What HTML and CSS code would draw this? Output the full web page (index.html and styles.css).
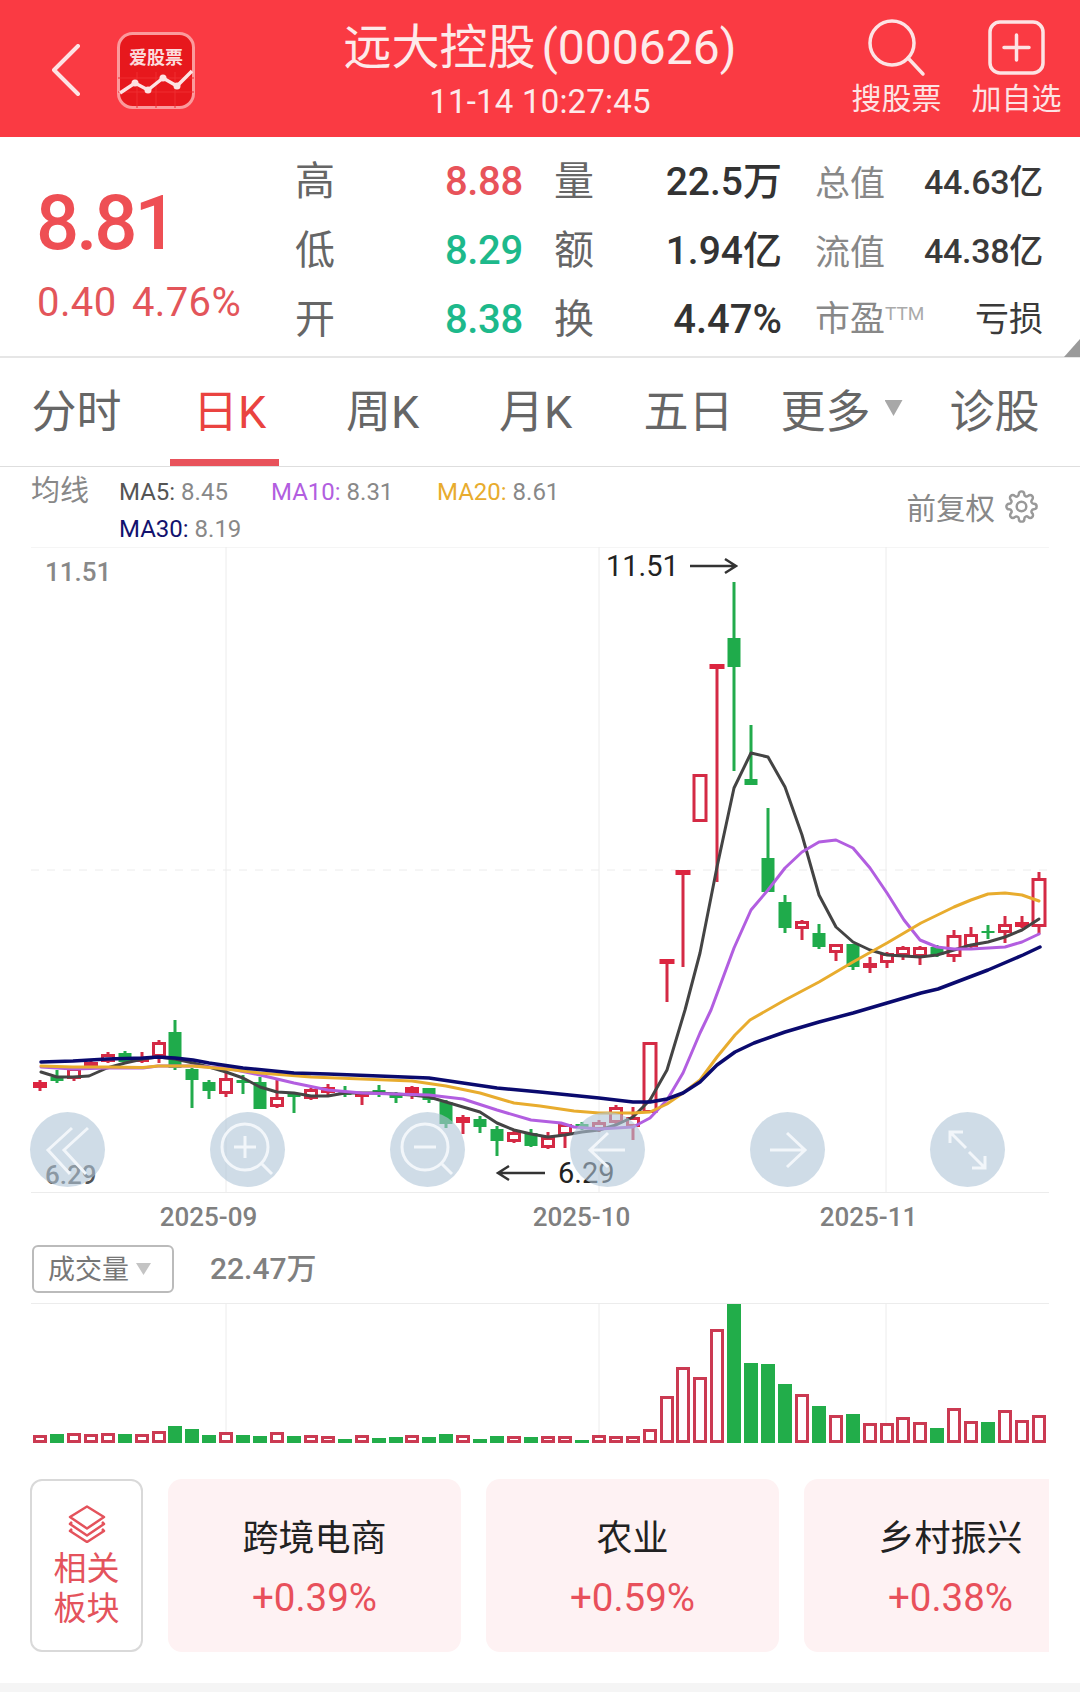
FILE: index.html
```html
<!DOCTYPE html>
<html lang="zh-CN">
<head>
<meta charset="utf-8">
<title>远大控股 (000626)</title>
<link rel="stylesheet" href="styles.css">
</head>
<body>
<div class="app">
  <header class="hdr">
    <div class="hdr-left">
      <svg class="back" viewBox="0 0 30 52"><path d="M26 2 2 26l24 24"/></svg>
      <svg class="logo" viewBox="0 0 78 77">
        <rect class="logo-bg" x="1.5" y="1.5" width="75" height="74" rx="14"/>
        <path class="logo-grid" d="M1 46H77M1 60H77M20 40V76M39 40V76M58 40V76"/>
        <text class="logo-text" x="39" y="32" text-anchor="middle">爱股票</text>
        <polyline class="logo-line" points="3,61 18,51 31,58 46,46 60,54 75,39"/>
        <circle class="logo-dot" cx="18" cy="51" r="3.5"/><circle class="logo-dot" cx="31" cy="58" r="3.5"/><circle class="logo-dot" cx="46" cy="46" r="3.5"/><circle class="logo-dot" cx="60" cy="54" r="3.5"/>
      </svg>
    </div>
    <div class="hdr-title">
      <div class="title">远大控股 (000626)</div>
      <div class="time">11-14 10:27:45</div>
    </div>
    <div class="hdr-actions">
      <div class="act">
        <svg class="act-icon" viewBox="0 0 87 62"><circle cx="39" cy="26" r="22"/><path d="M55 41 70 57"/></svg>
        <span class="act-label">搜股票</span>
      </div>
      <div class="act">
        <svg class="act-icon" viewBox="0 0 87 62"><rect x="17" y="5" width="53" height="51" rx="10"/><path d="M43.500 18V43M31 30.500H56"/></svg>
        <span class="act-label">加自选</span>
      </div>
    </div>
  </header>

  <section class="quote">
    <div class="price-box">
      <div class="price">8.81</div>
      <div class="change">0.40 4.76%</div>
    </div>
    <div class="stats">
      <span class="lab">高</span><span class="val up">8.88</span><span class="lab lab-2">量</span><span class="val dark">22.5万</span><span class="lab-s">总值</span><span class="val-s">44.63亿</span>
      <span class="lab">低</span><span class="val down">8.29</span><span class="lab lab-2">额</span><span class="val dark">1.94亿</span><span class="lab-s">流值</span><span class="val-s">44.38亿</span>
      <span class="lab">开</span><span class="val down">8.38</span><span class="lab lab-2">换</span><span class="val dark dark-num">4.47%</span><span class="lab-s lab-pe">市盈<sup class="ttm">TTM</sup></span><span class="val-s val-cn">亏损</span>
    </div>
    <span class="corner"></span>
  </section>

  <nav class="tabs">
    <span class="tab">分时</span>
    <span class="tab tab-on">日K</span>
    <span class="tab">周K</span>
    <span class="tab">月K</span>
    <span class="tab">五日</span>
    <span class="tab">更多<i class="caret"></i></span>
    <span class="tab">诊股</span>
  </nav>

  <section class="ma">
    <span class="ma-title">均线</span>
    <div class="ma-grid">
      <span class="ma-item"><b class="c5">MA5:</b> 8.45</span>
      <span class="ma-item"><b class="c10">MA10:</b> 8.31</span>
      <span class="ma-item"><b class="c20">MA20:</b> 8.61</span>
      <span class="ma-item"><b class="c30">MA30:</b> 8.19</span>
    </div>
    <div class="adj">
      <span>前复权</span>
      <svg class="gear" viewBox="0 0 24 24"><circle cx="12" cy="12" r="3.500"/><path d="M19.400 15a1.650 1.650 0 0 0 .33 1.820l.06.06a2 2 0 0 1 0 2.830 2 2 0 0 1-2.830 0l-.06-.06a1.650 1.650 0 0 0-1.820-.33 1.650 1.650 0 0 0-1 1.510V21a2 2 0 0 1-2 2 2 2 0 0 1-2-2v-.09A1.650 1.650 0 0 0 9 19.400a1.650 1.650 0 0 0-1.820.33l-.06.06a2 2 0 0 1-2.830 0 2 2 0 0 1 0-2.830l.06-.06a1.650 1.650 0 0 0 .33-1.820 1.650 1.650 0 0 0-1.510-1H3a2 2 0 0 1-2-2 2 2 0 0 1 2-2h.09A1.650 1.650 0 0 0 4.600 9a1.650 1.650 0 0 0-.33-1.820l-.06-.06a2 2 0 0 1 0-2.830 2 2 0 0 1 2.830 0l.06.06a1.650 1.650 0 0 0 1.820.33H9a1.650 1.650 0 0 0 1-1.510V3a2 2 0 0 1 2-2 2 2 0 0 1 2 2v.09a1.650 1.650 0 0 0 1 1.510 1.650 1.650 0 0 0 1.820-.33l.06-.06a2 2 0 0 1 2.830 0 2 2 0 0 1 0 2.830l-.06.06a1.650 1.650 0 0 0-.33 1.820V9a1.650 1.650 0 0 0 1.510 1H21a2 2 0 0 1 2 2 2 2 0 0 1-2 2h-.09a1.650 1.650 0 0 0-1.510 1z"/></svg>
    </div>
  </section>

  <section class="kline">
    <svg class="kline-svg" viewBox="0 547 1080 693">
      <path class="frame" d="M31 547H1049M31 1192.500H1049M226 547V1192M599 547V1192M886 547V1192"/>
      <path class="frame-dash" d="M31 870H1049"/>
      <path class="wick-g" d="M57 1070V1083M125 1051V1063M175 1020V1070M192 1068V1108M209 1080V1099M243 1075V1094M260 1077V1109M294 1092V1113M345 1086V1097M379 1085V1097M396 1092V1103M429 1088V1103M446 1100V1128M480 1116V1133M497 1126V1156M531 1129V1147M582 1122V1130M734 582V771M751 725V785M768 808V892M785 895V933M819 924V949M853 944V970M937 945V957M988 925V939"/>
      <path class="body-g" d="M57 1077V1081M125 1053V1062M175 1032V1068M192 1069V1080M209 1082V1091M243 1080V1083M260 1082V1109M294 1093V1097M345 1092V1095M379 1090V1092M396 1093V1098M429 1088V1100M446 1102V1124M480 1119V1127M497 1129V1141M531 1133V1146M582 1124V1128M734 638V667M751 779V785M768 858V892M785 902V928M819 933V947M853 944V967M937 947V955M988 931V933"/>
      <path class="wick-r" d="M40 1080V1091M74 1066V1081M91 1060V1069M108 1052V1063M142 1052V1063M159 1040V1063M226 1068V1097M277 1078V1108M311 1088V1100M328 1084V1095M362 1093V1105M412 1086V1099M463 1115V1134M514 1130V1143M548 1132V1149M565 1124V1148M599 1120V1132M616 1105V1124M633 1107V1140M667 960V1002M683 871V967M717 665V882M802 920V940M836 944V961M870 957V973M887 952V968M903 946V960M920 946V965M954 930V962M971 927V948M1005 916V943M1022 916V928M1039 872V934"/>
      <path class="body-r" d="M40 1082V1088M142 1057V1062M328 1087V1093M362 1094V1097M412 1087V1094M463 1117V1123M1022 922V927"/>
      <path class="body-t" d="M667 959V964M683 870V875M717 664V669"/>
      <path class="hollow" d="M68.500 1069.500h11V1077.500h-11zM85.500 1063.500h11V1066.500h-11zM102.500 1055.500h11V1060.500h-11zM153.500 1043.500h11V1055.500h-11zM220.500 1079.500h11V1092.500h-11zM271.500 1098.500h11V1105.500h-11zM305.500 1090.500h11V1097.500h-11zM508.500 1133.500h11V1140.500h-11zM542.500 1138.500h11V1146.500h-11zM559.500 1125.500h11V1133.500h-11zM593.500 1123.500h11V1128.500h-11zM610.500 1108.500h11V1121.500h-11zM627.500 1118.500h11V1125.500h-11zM644 1043.500h12V1111.500h-12zM694 775.500h12V820.500h-12zM796.500 922.500h11V927.500h-11zM830.500 945.500h11V951.500h-11zM864.500 964.500h11V966.500h-11zM881.500 954.500h11V961.500h-11zM897.500 948.500h11V954.500h-11zM914.500 948.500h11V955.500h-11zM948 936.500h12V955.500h-12zM965.500 935.500h11V945.500h-11zM999.500 925.500h11V931.500h-11zM1033 879.500h12V925.500h-12z"/>
      <polyline class="line l5" points="41,1072 57,1077 73,1077 89,1076 107,1068 125,1063 143,1059 158,1057 175,1059 193,1063 209,1067 226,1072 243,1078 260,1087 277,1092 294,1093 311,1096 328,1096 345,1093 362,1093 379,1093 395,1094 412,1095 429,1097 446,1102 463,1107 480,1112 497,1123 514,1130 531,1134 548,1137 565,1135 582,1132 599,1130 616,1125 633,1117 650,1100 667,1070 685,1010 700,953 717,867 734,788 751,753 768,757 785,787 802,835 819,895 836,927 853,942 870,950 887,955 904,956 920,957 937,955 954,950 971,945 988,942 1005,937 1022,930 1039,919"/>
      <polyline class="line l10" points="41,1067 73,1069 107,1068 143,1068 158,1066 193,1066 226,1068 260,1075 294,1083 328,1090 362,1093 395,1094 429,1095 463,1099 497,1110 531,1120 561,1123 574,1127 599,1129 633,1127 650,1118 667,1100 683,1073 700,1033 711,1010 734,948 751,910 768,890 785,868 802,852 819,842 836,840 853,848 870,868 887,893 904,920 920,940 937,947 954,949 971,949 988,948 1005,947 1022,942 1039,934"/>
      <polyline class="line l20" points="41,1066 73,1067 107,1067 143,1067.500 158,1066 193,1066 226,1069 260,1073 311,1077 362,1079 412,1081 446,1086 480,1093 514,1103 540,1106 574,1111 599,1113 633,1113 650,1112 667,1104 683,1093 700,1080 717,1057 735,1035 750,1020 785,1000 819,982 853,962 887,943 921,923 954,907 971,900 988,894 1005,893 1022,895 1039,901"/>
      <polyline class="line l30" points="41,1062 73,1061 107,1059 143,1058 158,1057 175,1058 193,1060 209,1063 243,1068 294,1073 328,1074 379,1076 429,1078 463,1083 497,1088 540,1092 599,1098 633,1102 650,1102 667,1099 683,1093 700,1082 717,1065 735,1052 754,1043 785,1032 819,1022 853,1013 887,1003 921,993 938,989 988,970 1023,955 1040,947"/>
      <text class="axis-price" x="45" y="581">11.51</text>
      <text class="axis-price axis-low" x="45" y="1184">6.29</text>
      <text class="mark" x="606" y="576">11.51</text>
      <path class="arrow" d="M690 566H735M725 559l11 7-11 7"/>
      <text class="mark" x="558" y="1183">6.29</text>
      <path class="arrow" d="M545 1173H499M509 1166l-11 7 11 7"/>
      <text class="date" x="208.500" y="1226" text-anchor="middle">2025-09</text>
      <text class="date" x="581.500" y="1226" text-anchor="middle">2025-10</text>
      <text class="date" x="868.500" y="1226" text-anchor="middle">2025-11</text>
    </svg>
    <div class="ctrls">
      <span class="ctrl"><svg viewBox="0 0 75 75"><path d="M42 16 18 38l22 24M58 16 34 38l22 24"/></svg></span>
      <span class="ctrl"><svg viewBox="0 0 75 75"><circle cx="35" cy="35" r="23"/><path d="M35 24V46M24 35H46M52 52 62 62"/></svg></span>
      <span class="ctrl"><svg viewBox="0 0 75 75"><circle cx="35" cy="35" r="23"/><path d="M24 35H46M52 52 62 62"/></svg></span>
      <span class="ctrl"><svg viewBox="0 0 75 75"><path d="M55 38H21M38 21 20 38l18 17"/></svg></span>
      <span class="ctrl"><svg viewBox="0 0 75 75"><path d="M20 38H54M37 21l18 17-18 17"/></svg></span>
      <span class="ctrl"><svg viewBox="0 0 75 75"><path d="M20 31V20H33M20 20 36 36M55 44V56H42M55 56 39 40"/></svg></span>
    </div>
  </section>

  <section class="vol-head">
    <span class="vol-select">成交量<i class="caret caret-s"></i></span>
    <span class="vol-num">22.47万</span>
  </section>

  <svg class="vol-svg" viewBox="0 1303 1080 141">
    <path class="frame" d="M31 1303.500H1049M226 1304V1443M599 1304V1443M886 1304V1443"/>
    <path class="vol-g" d="M57 1443V1434M125 1443V1434M175 1443V1426M192 1443V1429M209 1443V1435M243 1443V1435M260 1443V1436M294 1443V1436M345 1443V1439M379 1443V1438M396 1443V1437M429 1443V1437M446 1443V1434M480 1443V1439M497 1443V1436M531 1443V1437M582 1443V1440M734 1443V1304M751 1443V1363M768 1443V1364M785 1443V1384M819 1443V1406M853 1443V1414M937 1443V1428M988 1443V1422"/>
    <path class="vol-r" d="M34.500 1441.500V1436.500h11V1441.500zM68.500 1441.500V1434.500h11V1441.500zM85.500 1441.500V1435.500h11V1441.500zM102.500 1441.500V1434.500h11V1441.500zM136.500 1441.500V1435.500h11V1441.500zM153.500 1441.500V1432.500h11V1441.500zM220.500 1441.500V1433.500h11V1441.500zM271.500 1441.500V1433.500h11V1441.500zM305.500 1441.500V1436.500h11V1441.500zM322.500 1441.500V1437.500h11V1441.500zM356.500 1441.500V1436.500h11V1441.500zM406.500 1441.500V1436.500h11V1441.500zM457.500 1441.500V1436.500h11V1441.500zM508.500 1441.500V1437.500h11V1441.500zM542.500 1441.500V1437.500h11V1441.500zM559.500 1441.500V1437.500h11V1441.500zM593.500 1441.500V1436.500h11V1441.500zM610.500 1441.500V1437.500h11V1441.500zM627.500 1441.500V1437.500h11V1441.500zM644.500 1441.500V1430.500h11V1441.500zM661.500 1441.500V1397.500h11V1441.500zM677.500 1441.500V1368.500h11V1441.500zM694.500 1441.500V1378.500h11V1441.500zM711.500 1441.500V1330.500h11V1441.500zM796.500 1441.500V1395.500h11V1441.500zM830.500 1441.500V1416.500h11V1441.500zM864.500 1441.500V1424.500h11V1441.500zM881.500 1441.500V1424.500h11V1441.500zM897.500 1441.500V1418.500h11V1441.500zM914.500 1441.500V1423.500h11V1441.500zM948.500 1441.500V1409.500h11V1441.500zM965.500 1441.500V1422.500h11V1441.500zM999.500 1441.500V1411.500h11V1441.500zM1016.500 1441.500V1421.500h11V1441.500zM1033.500 1441.500V1416.500h11V1441.500z"/>
  </svg>

  <section class="sectors">
    <div class="sec-head">
      <svg class="layers" viewBox="0 0 42 38"><path d="M21 1.500 38 12 21 23.500 4 12Z"/><path d="M6 17 4 19l17 11.500L38 19l-2-2"/><path d="M6 24 4 26l17 11L38 26l-2-2"/></svg>
      <span>相关</span>
      <span>板块</span>
    </div>
    <div class="sec-card"><span class="sec-name">跨境电商</span><span class="sec-pct">+0.39%</span></div>
    <div class="sec-card"><span class="sec-name">农业</span><span class="sec-pct">+0.59%</span></div>
    <div class="sec-card"><span class="sec-name">乡村振兴</span><span class="sec-pct">+0.38%</span></div>
  </section>

  <div class="foot"></div>
</div>
</body>
</html>
```

FILE: styles.css
```css
* { box-sizing: border-box; }
html, body { margin: 0; padding: 0; background: #fff; }
body { font-family: Roboto, "Noto Sans CJK SC", sans-serif; }
.app { width: 1080px; height: 1692px; overflow: hidden; background: #fff; position: relative; }

/* header */
.hdr { height: 137px; background: #fa3a43; color: #fff; display: grid; grid-template-columns: 1fr auto 1fr; }
.hdr-left { display: flex; align-items: flex-start; padding: 32px 0 0 52px; }
.back { width: 30px; height: 52px; margin: 12px 35px 0 0; fill: none; stroke: #fde3e4; stroke-width: 4; stroke-linecap: round; stroke-linejoin: round; }
.logo { width: 78px; height: 77px; }
.logo-bg { fill: #e7181d; stroke: #fb9a9c; stroke-width: 3; }
.logo-grid { stroke: #ef2c30; stroke-width: 1; fill: none; }
.logo-text { fill: #fbdcdc; font-size: 18px; font-weight: 700; font-family: "Noto Sans CJK SC", sans-serif; }
.logo-line { fill: none; stroke: #fde3e3; stroke-width: 3.5; }
.logo-dot { fill: #fde3e3; }
.hdr-title { display: flex; flex-direction: column; align-items: center; padding-top: 21px; }
.title { font-size: 48px; line-height: 54px; white-space: nowrap; word-spacing: -6px; color: #fdeaea; }
.time { font-size: 33px; line-height: 40px; margin-top: 7px; letter-spacing: .2px; color: #fdeaea; }
.hdr-actions { display: flex; justify-content: flex-end; gap: 33px; padding: 17px 20px 0 0; }
.act { width: 87px; display: flex; flex-direction: column; align-items: center; }
.act-icon { width: 87px; height: 62px; fill: none; stroke: #fde3e4; stroke-width: 3.5; stroke-linecap: round; }
.act-label { font-size: 30px; line-height: 34px; margin-top: 3px; color: #fde3e4; white-space: nowrap; }

/* quote */
.quote { height: 221px; border-bottom: 2px solid #e6e6e6; display: flex; position: relative; }
.price-box { width: 296px; padding: 49px 0 0 36px; }
.price { font-size: 76px; line-height: 74px; font-weight: 500; letter-spacing: -3px; color: #ee4f54; }
.change { font-size: 40px; line-height: 48px; margin: 19px 0 0 1px; color: #e3555a; word-spacing: 5px; letter-spacing: .4px; white-space: nowrap; }
.stats { display: grid; grid-template-columns: 40px 187px 72px 185px 110px 152px; grid-auto-rows: 69px; padding-top: 10px; align-items: center; }
.lab { font-size: 40px; color: #666; margin-bottom: 8px; font-family: "Noto Sans CJK SC", sans-serif; margin-left: -1px; }
.lab-2 { padding-left: 32px; }
.val { font-size: 40px; font-weight: 500; text-align: right; letter-spacing: -.3px; white-space: nowrap; }
.up { color: #e8535a; }
.down { color: #1db98b; }
.dark { color: #333; font-size: 39px; letter-spacing: 0; margin: 0 -2px 8px 0; }
.dark-num { margin-bottom: 0; font-size: 40px; }
.lab-s { font-size: 35px; color: #888; padding-left: 35px; white-space: nowrap; margin-bottom: 3px; }
.lab-pe { margin-bottom: 8px; }
.ttm { font-size: 19px; vertical-align: 11px; line-height: 0; color: #aaa; }
.val-s { font-size: 34px; font-weight: 500; color: #3a3a3a; text-align: right; letter-spacing: -.3px; white-space: nowrap; margin: 0 -1px 4px 0; }
.val-cn { font-weight: 400; letter-spacing: 0; margin-bottom: 7px; }
.corner { position: absolute; right: 0; bottom: -1px; width: 16px; height: 18px; background: #9a9a9a; clip-path: polygon(100% 0, 100% 100%, 0 100%); }

/* tabs */
.tabs { height: 109px; display: grid; grid-template-columns: repeat(7, 153px); border-bottom: 1px solid #dedede; }
.tab { position: relative; display: flex; align-items: center; justify-content: center; font-size: 45px; color: #666; padding-bottom: 8px; }
.tab-on { color: #ea4340; }
.tab-on::after { content: ""; position: absolute; left: 17px; right: 27px; bottom: 0; height: 7px; background: #e8525b; }
.caret { display: inline-block; width: 18px; height: 16px; margin: 0 0 0 14px; background: #a8a8a8; clip-path: polygon(0 0, 100% 0, 50% 100%); }

/* ma legend */
.ma { height: 80px; display: flex; padding: 6px 42px 0 31px; }
.ma-title { width: 88px; font-size: 29px; line-height: 37px; color: #888; }
.ma-grid { display: grid; grid-template-columns: 152px 166px 150px; grid-auto-rows: 37px; align-items: center; }
.ma-item { font-size: 24px; color: #888; white-space: nowrap; }
.ma-item b { font-weight: 400; }
.c5 { color: #555; }
.c10 { color: #b25ee0; }
.c20 { color: #e8ac2e; }
.c30 { color: #12126e; }
.adj { margin-left: auto; display: flex; align-items: center; gap: 10px; height: 66px; font-size: 29.500px; color: #888; }
.gear { width: 33px; height: 33px; fill: none; stroke: #999; stroke-width: 1.8; }

/* k-line */
.kline { position: relative; height: 693px; }
.kline-svg { display: block; width: 1080px; height: 693px; }
.frame { fill: none; stroke: #ececec; stroke-width: 1; }
.frame-dash { fill: none; stroke: #ececec; stroke-width: 1; stroke-dasharray: 8 8; }
.wick-g { fill: none; stroke: #22ab4c; stroke-width: 3; }
.body-g { fill: none; stroke: #1fab4b; stroke-width: 13; }
.wick-r { fill: none; stroke: #d42a45; stroke-width: 3; }
.body-r { fill: none; stroke: #dc2540; stroke-width: 14; }
.body-t { fill: none; stroke: #dc2540; stroke-width: 15; }
.hollow { fill: #fff; stroke: #d42a45; stroke-width: 3; }
.line { fill: none; stroke-width: 3; stroke-linejoin: round; stroke-linecap: round; }
.l5 { stroke: #444; }
.l10 { stroke: #b25ee0; }
.l20 { stroke: #e8ac2e; }
.l30 { stroke: #0a0a6e; stroke-width: 3.5; }
.axis-price { font-size: 26px; font-weight: 500; fill: #888; }
.axis-low { fill: #555; }
.mark { font-size: 29px; fill: #222; }
.arrow { fill: none; stroke: #333; stroke-width: 2.5; }
.date { font-size: 26px; font-weight: 500; fill: #808080; }
.ctrls { position: absolute; left: 30px; top: 565px; width: 975px; display: flex; justify-content: space-between; }
.ctrl { width: 75px; height: 75px; border-radius: 50%; background: rgba(175, 196, 215, .6); }
.ctrl svg { display: block; width: 75px; height: 75px; fill: none; stroke: #f2f6fa; stroke-width: 3; }

/* volume */
.vol-head { height: 63px; padding: 5px 0 10px 32px; display: flex; align-items: center; }
.vol-select { width: 142px; height: 48px; border: 2px solid #bbb; border-radius: 6px; display: flex; align-items: center; padding: 0 0 4px 14px; font-size: 27px; color: #777; }
.caret-s { width: 15px; height: 12px; margin: 4px 0 0 7px; background: #c4c4c4; }
.vol-num { margin: 0 0 6px 36px; font-size: 30px; font-weight: 500; color: #808080; }
.vol-svg { display: block; width: 1080px; height: 141px; }
.vol-g { fill: none; stroke: #22ad4a; stroke-width: 14; }
.vol-r { fill: #fff; stroke: #cb3a52; stroke-width: 3; }

/* sectors */
.sectors { margin: 35px 31px 0 30px; height: 173px; display: flex; gap: 25px; overflow: hidden; }
.sec-head { flex: none; width: 113px; border: 2px solid #d9d9d9; border-radius: 12px; display: flex; flex-direction: column; align-items: center; padding-top: 24px; font-size: 33px; line-height: 40px; color: #e4535c; }
.layers { width: 42px; height: 38px; margin-bottom: 6px; fill: none; stroke: #e4535c; stroke-width: 2.5; stroke-linejoin: round; }
.sec-card { flex: none; width: 293px; background: #fef2f3; border-radius: 14px; display: flex; flex-direction: column; align-items: center; padding-top: 35px; }
.sec-name { font-size: 36px; line-height: 50px; color: #222; }
.sec-pct { font-size: 38.500px; line-height: 50px; margin-top: 9px; color: #e8505b; }

.foot { margin-top: 31px; height: 9px; background: #f5f5f5; }
```
